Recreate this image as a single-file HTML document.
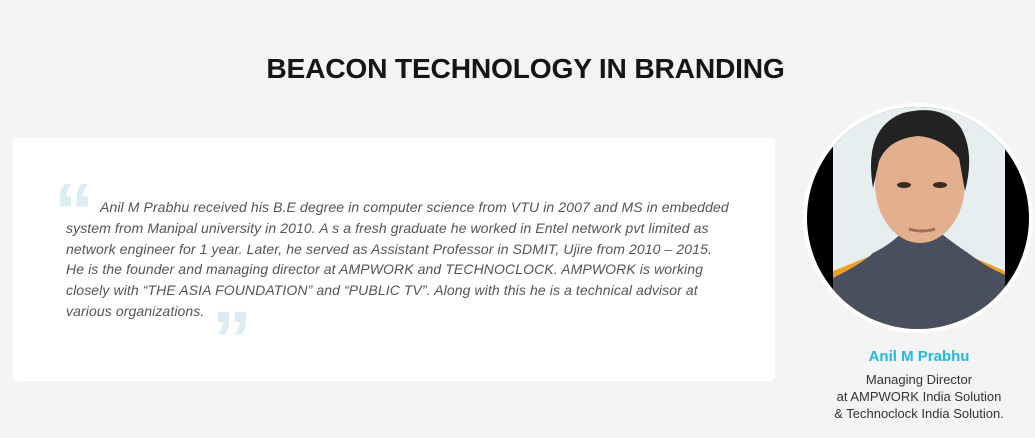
<!DOCTYPE html>
<html><head><style>
body{margin:0;width:1035px;height:438px;background:#f4f4f4;font-family:"Liberation Sans",sans-serif;position:relative;overflow:hidden}
h1{position:absolute;top:52px;left:0;width:1051px;text-align:center;margin:0;font-size:28.2px;font-weight:bold;color:#151515;letter-spacing:-0.2px}
.card{position:absolute;left:13px;top:138px;width:762px;height:243px;background:#fff;border-radius:4px}
.q{position:absolute;left:66px;top:197px;width:700px;font-style:italic;font-size:14px;line-height:20.8px;color:#555;letter-spacing:0.1px;white-space:nowrap}
.qo{position:absolute;left:54px;top:172px;font-size:80px;font-family:"Liberation Sans",sans-serif;font-weight:bold;color:#dcecf5;line-height:1}
.qc{position:absolute;left:212px;top:300px;font-size:80px;font-family:"Liberation Sans",sans-serif;font-weight:bold;color:#dcecf5;line-height:1}
.ph{position:absolute;left:803px;top:103px;width:230px;height:230px;border-radius:50%;background:#fff}
.name{position:absolute;left:805px;top:348px;width:228px;text-align:center;color:#1fb9e6;font-weight:bold;font-size:15px}
.role{position:absolute;left:805px;top:371px;width:228px;text-align:center;color:#333;font-size:13px;line-height:17px}
</style></head><body>
<h1>BEACON TECHNOLOGY IN BRANDING</h1>
<div class="card"></div>
<div class="qo">“</div>
<div class="qc">”</div>
<div class="q"><span style="padding-left:34px"></span>Anil M Prabhu received his B.E degree in computer science from VTU in 2007 and MS in embedded<br>system from Manipal university in 2010. A s a fresh graduate he worked in Entel network pvt limited as<br>network engineer for 1 year. Later, he served as Assistant Professor in SDMIT, Ujire from 2010 – 2015.<br>He is the founder and managing director at AMPWORK and TECHNOCLOCK. AMPWORK is working<br>closely with “THE ASIA FOUNDATION” and “PUBLIC TV”. Along with this he is a technical advisor at<br>various organizations.</div>
<div class="ph">
<svg width="230" height="230" viewBox="0 0 230 230">
<defs><clipPath id="c"><circle cx="115" cy="115" r="111"/></clipPath></defs>
<g clip-path="url(#c)">
<rect width="230" height="230" fill="#000"/>
<rect x="30" y="0" width="172" height="230" fill="#e6eef0"/>
<path d="M30 168 L75 150 L115 160 L160 150 L202 168 L202 230 L30 230Z" fill="#f0a020"/>
<path d="M30 175 Q60 160 70 150 Q90 140 100 128 L135 128 Q150 140 165 150 Q180 162 202 172 L202 230 L30 230Z" fill="#4a4f5e"/>
<ellipse cx="117" cy="80" rx="45" ry="60" fill="#e2b08e"/>
<path d="M70 85 Q60 25 100 10 Q140 0 158 25 Q172 50 162 88 L156 55 Q140 35 115 33 Q85 36 76 58Z" fill="#222"/>
<ellipse cx="101" cy="82" rx="7" ry="3" fill="#3a2a20"/><ellipse cx="137" cy="82" rx="7" ry="3" fill="#3a2a20"/>
<path d="M106 126 Q119 130 132 126" stroke="#a06a55" stroke-width="3" fill="none"/>
</g></svg>
</div>
<div class="name">Anil M Prabhu</div>
<div class="role">Managing Director<br>at AMPWORK India Solution<br>&amp; Technoclock India Solution.</div>
</body></html>
